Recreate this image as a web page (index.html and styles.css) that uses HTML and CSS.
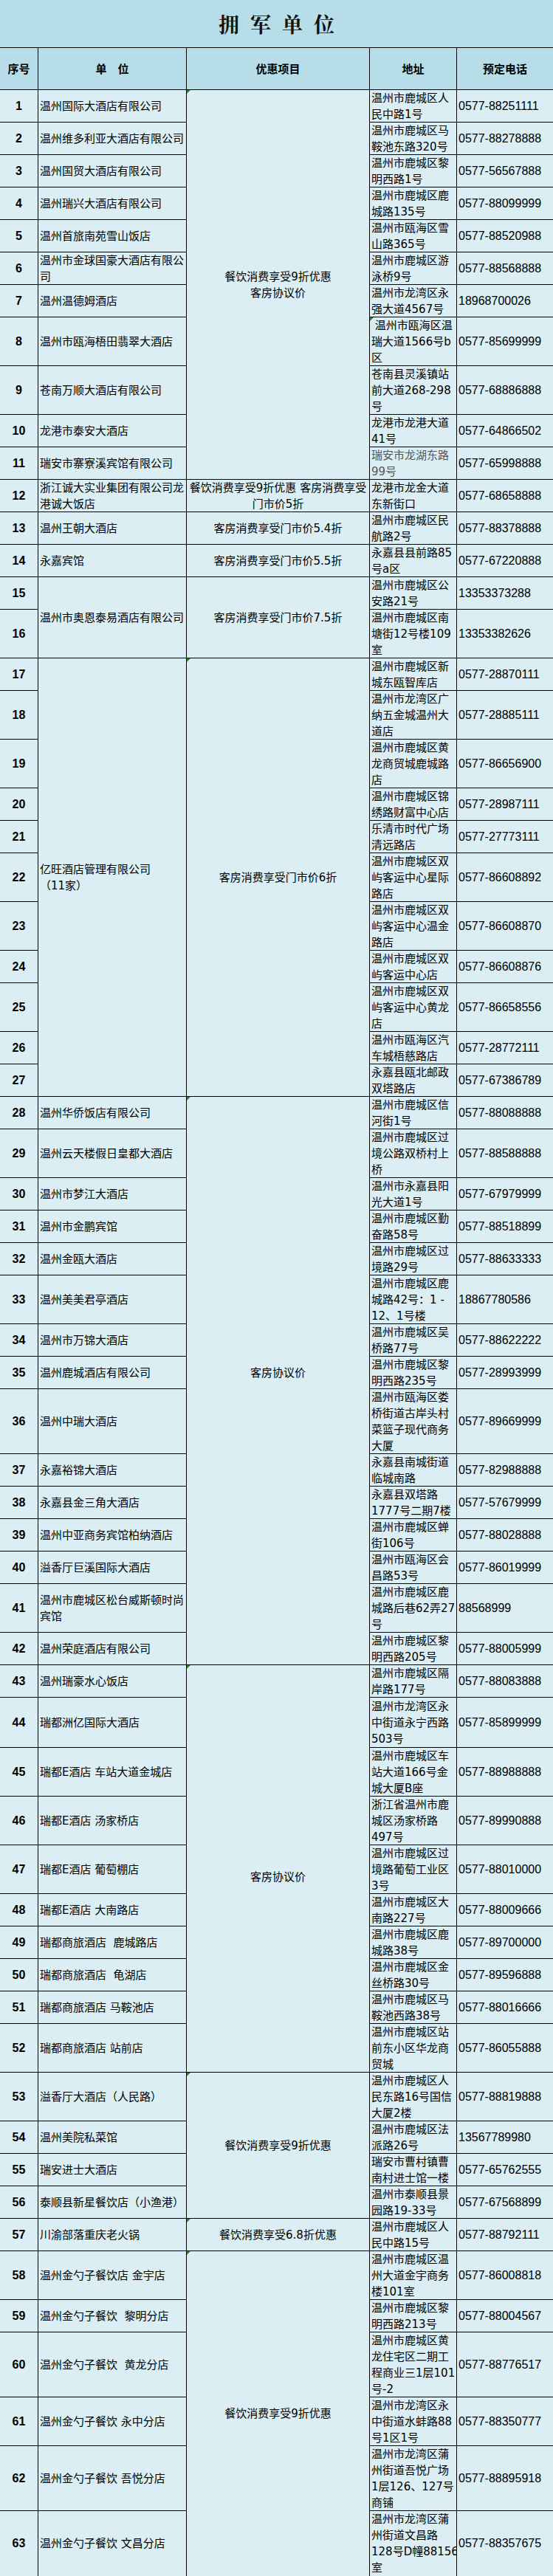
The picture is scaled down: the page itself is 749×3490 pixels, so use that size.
FILE: index.html
```html
<!DOCTYPE html>
<html lang="zh-CN">
<head>
<meta charset="utf-8">
<title>拥军单位</title>
<link rel="stylesheet" href="styles.css">
</head>
<body>
<div class="sheet">
  <div class="title">拥军单位</div>
  <div class="grid">
    <div class="c hd">序号</div><div class="c hd">单　位</div><div class="c hd">优惠项目</div><div class="c hd">地址</div><div class="c hd">预定电话</div>

    <div class="c idx">1</div><div class="c name">温州国际大酒店有限公司</div><div class="c offer s11 tri"><span>餐饮消费享受9折优惠<br>客房协议价</span></div><div class="c addr"><span>温州市鹿城区人<br>民中路1号</span></div><div class="c tel">0577-88251111</div>
    <div class="c idx">2</div><div class="c name">温州维多利亚大酒店有限公司</div><div class="c addr"><span>温州市鹿城区马<br>鞍池东路320号</span></div><div class="c tel">0577-88278888</div>
    <div class="c idx">3</div><div class="c name">温州国贸大酒店有限公司</div><div class="c addr"><span>温州市鹿城区黎<br>明西路1号</span></div><div class="c tel">0577-56567888</div>
    <div class="c idx">4</div><div class="c name">温州瑞兴大酒店有限公司</div><div class="c addr"><span>温州市鹿城区鹿<br>城路135号</span></div><div class="c tel">0577-88099999</div>
    <div class="c idx">5</div><div class="c name">温州首旅南苑雪山饭店</div><div class="c addr"><span>温州市瓯海区雪<br>山路365号</span></div><div class="c tel">0577-88520988</div>
    <div class="c idx">6</div><div class="c name"><span>温州市金球国豪大酒店有限公<br>司</span></div><div class="c addr"><span>温州市鹿城区游<br>泳桥9号</span></div><div class="c tel">0577-88568888</div>
    <div class="c idx">7</div><div class="c name">温州温德姆酒店</div><div class="c addr"><span>温州市龙湾区永<br>强大道4567号</span></div><div class="c tel">18968700026</div>
    <div class="c idx">8</div><div class="c name">温州市瓯海梧田翡翠大酒店</div><div class="c addr tri"><span>&#160;温州市瓯海区温<br>瑞大道1566号b<br>区</span></div><div class="c tel">0577-85699999</div>
    <div class="c idx">9</div><div class="c name">苍南万顺大酒店有限公司</div><div class="c addr"><span>苍南县灵溪镇站<br>前大道268-298<br>号</span></div><div class="c tel">0577-68886888</div>
    <div class="c idx">10</div><div class="c name">龙港市泰安大酒店</div><div class="c addr"><span>龙港市龙港大道<br>41号</span></div><div class="c tel">0577-64866502</div>
    <div class="c idx">11</div><div class="c name">瑞安市寨寮溪宾馆有限公司</div><div class="c addr grey"><span>瑞安市龙湖东路<br>99号</span></div><div class="c tel">0577-65998888</div>
    <div class="c idx">12</div><div class="c name"><span>浙江诚大实业集团有限公司龙<br>港诚大饭店</span></div><div class="c offer"><span>餐饮消费享受9折优惠 客房消费享受<br>门市价5折</span></div><div class="c addr"><span>龙港市龙金大道<br>东新街口</span></div><div class="c tel">0577-68658888</div>
    <div class="c idx">13</div><div class="c name">温州王朝大酒店</div><div class="c offer">客房消费享受门市价5.4折</div><div class="c addr"><span>温州市鹿城区民<br>航路2号</span></div><div class="c tel">0577-88378888</div>
    <div class="c idx">14</div><div class="c name">永嘉宾馆</div><div class="c offer">客房消费享受门市价5.5折</div><div class="c addr"><span>永嘉县县前路85<br>号a区</span></div><div class="c tel">0577-67220888</div>
    <div class="c idx">15</div><div class="c name s2">温州市奥恩泰易酒店有限公司</div><div class="c offer s2">客房消费享受门市价7.5折</div><div class="c addr"><span>温州市鹿城区公<br>安路21号</span></div><div class="c tel">13353373288</div>
    <div class="c idx">16</div><div class="c addr"><span>温州市鹿城区南<br>塘街12号楼109<br>室</span></div><div class="c tel">13353382626</div>
    <div class="c idx">17</div><div class="c name s11"><span>亿旺酒店管理有限公司<br>（11家）</span></div><div class="c offer s11 tri">客房消费享受门市价6折</div><div class="c addr"><span>温州市鹿城区新<br>城东瓯智库店</span></div><div class="c tel">0577-28870111</div>
    <div class="c idx">18</div><div class="c addr"><span>温州市龙湾区广<br>纳五金城温州大<br>道店</span></div><div class="c tel">0577-28885111</div>
    <div class="c idx">19</div><div class="c addr"><span>温州市鹿城区黄<br>龙商贸城鹿城路<br>店</span></div><div class="c tel">0577-86656900</div>
    <div class="c idx">20</div><div class="c addr"><span>温州市鹿城区锦<br>绣路财富中心店</span></div><div class="c tel">0577-28987111</div>
    <div class="c idx">21</div><div class="c addr"><span>乐清市时代广场<br>清远路店</span></div><div class="c tel">0577-27773111</div>
    <div class="c idx">22</div><div class="c addr"><span>温州市鹿城区双<br>屿客运中心星际<br>路店</span></div><div class="c tel">0577-86608892</div>
    <div class="c idx">23</div><div class="c addr"><span>温州市鹿城区双<br>屿客运中心温金<br>路店</span></div><div class="c tel">0577-86608870</div>
    <div class="c idx">24</div><div class="c addr"><span>温州市鹿城区双<br>屿客运中心店</span></div><div class="c tel">0577-86608876</div>
    <div class="c idx">25</div><div class="c addr"><span>温州市鹿城区双<br>屿客运中心黄龙<br>店</span></div><div class="c tel">0577-86658556</div>
    <div class="c idx">26</div><div class="c addr"><span>温州市瓯海区汽<br>车城梧慈路店</span></div><div class="c tel">0577-28772111</div>
    <div class="c idx">27</div><div class="c addr"><span>永嘉县瓯北邮政<br>双塔路店</span></div><div class="c tel">0577-67386789</div>
    <div class="c idx">28</div><div class="c name">温州华侨饭店有限公司</div><div class="c offer s15 tri up">客房协议价</div><div class="c addr"><span>温州市鹿城区信<br>河街1号</span></div><div class="c tel">0577-88088888</div>
    <div class="c idx">29</div><div class="c name">温州云天楼假日皇都大酒店</div><div class="c addr"><span>温州市鹿城区过<br>境公路双桥村上<br>桥</span></div><div class="c tel">0577-88588888</div>
    <div class="c idx">30</div><div class="c name">温州市梦江大酒店</div><div class="c addr"><span>温州市永嘉县阳<br>光大道1号</span></div><div class="c tel">0577-67979999</div>
    <div class="c idx">31</div><div class="c name">温州市金鹏宾馆</div><div class="c addr"><span>温州市鹿城区勤<br>奋路58号</span></div><div class="c tel">0577-88518899</div>
    <div class="c idx">32</div><div class="c name">温州金瓯大酒店</div><div class="c addr"><span>温州市鹿城区过<br>境路29号</span></div><div class="c tel">0577-88633333</div>
    <div class="c idx">33</div><div class="c name">温州美美君亭酒店</div><div class="c addr"><span>温州市鹿城区鹿<br>城路42号：1 -<br>12、1号楼</span></div><div class="c tel">18867780586</div>
    <div class="c idx">34</div><div class="c name">温州市万锦大酒店</div><div class="c addr"><span>温州市鹿城区吴<br>桥路77号</span></div><div class="c tel">0577-88622222</div>
    <div class="c idx">35</div><div class="c name">温州鹿城酒店有限公司</div><div class="c addr"><span>温州市鹿城区黎<br>明西路235号</span></div><div class="c tel">0577-28993999</div>
    <div class="c idx">36</div><div class="c name">温州中瑞大酒店</div><div class="c addr"><span>温州市瓯海区娄<br>桥街道古岸头村<br>菜篮子现代商务<br>大厦</span></div><div class="c tel">0577-89669999</div>
    <div class="c idx">37</div><div class="c name">永嘉裕锦大酒店</div><div class="c addr"><span>永嘉县南城街道<br>临城南路</span></div><div class="c tel">0577-82988888</div>
    <div class="c idx">38</div><div class="c name">永嘉县金三角大酒店</div><div class="c addr"><span>永嘉县双塔路<br>1777号二期7楼</span></div><div class="c tel">0577-57679999</div>
    <div class="c idx">39</div><div class="c name">温州中亚商务宾馆柏纳酒店</div><div class="c addr"><span>温州市鹿城区蝉<br>街106号</span></div><div class="c tel">0577-88028888</div>
    <div class="c idx">40</div><div class="c name">溢香厅巨溪国际大酒店</div><div class="c addr"><span>温州市瓯海区会<br>昌路53号</span></div><div class="c tel">0577-86019999</div>
    <div class="c idx">41</div><div class="c name"><span>温州市鹿城区松台威斯顿时尚<br>宾馆</span></div><div class="c addr"><span>温州市鹿城区鹿<br>城路后巷62弄27<br>号</span></div><div class="c tel">88568999</div>
    <div class="c idx">42</div><div class="c name">温州荣庭酒店有限公司</div><div class="c addr"><span>温州市鹿城区黎<br>明西路205号</span></div><div class="c tel">0577-88005999</div>
    <div class="c idx">43</div><div class="c name">温州瑞豪水心饭店</div><div class="c offer s10 tri down">客房协议价</div><div class="c addr"><span>温州市鹿城区隔<br>岸路177号</span></div><div class="c tel">0577-88083888</div>
    <div class="c idx">44</div><div class="c name">瑞都洲亿国际大酒店</div><div class="c addr"><span>温州市龙湾区永<br>中街道永宁西路<br>503号</span></div><div class="c tel">0577-85899999</div>
    <div class="c idx">45</div><div class="c name">瑞都E酒店 车站大道金城店</div><div class="c addr"><span>温州市鹿城区车<br>站大道166号金<br>城大厦B座</span></div><div class="c tel">0577-88988888</div>
    <div class="c idx">46</div><div class="c name">瑞都E酒店 汤家桥店</div><div class="c addr"><span>浙江省温州市鹿<br>城区汤家桥路<br>497号</span></div><div class="c tel">0577-89990888</div>
    <div class="c idx">47</div><div class="c name">瑞都E酒店 葡萄棚店</div><div class="c addr"><span>温州市鹿城区过<br>境路葡萄工业区<br>3号</span></div><div class="c tel">0577-88010000</div>
    <div class="c idx">48</div><div class="c name">瑞都E酒店 大南路店</div><div class="c addr"><span>温州市鹿城区大<br>南路227号</span></div><div class="c tel">0577-88009666</div>
    <div class="c idx">49</div><div class="c name">瑞都商旅酒店&#160; 鹿城路店</div><div class="c addr"><span>温州市鹿城区鹿<br>城路38号</span></div><div class="c tel">0577-89700000</div>
    <div class="c idx">50</div><div class="c name">瑞都商旅酒店&#160; 龟湖店</div><div class="c addr"><span>温州市鹿城区金<br>丝桥路30号</span></div><div class="c tel">0577-89596888</div>
    <div class="c idx">51</div><div class="c name">瑞都商旅酒店 马鞍池店</div><div class="c addr"><span>温州市鹿城区马<br>鞍池西路38号</span></div><div class="c tel">0577-88016666</div>
    <div class="c idx">52</div><div class="c name">瑞都商旅酒店 站前店</div><div class="c addr"><span>温州市鹿城区站<br>前东小区华龙商<br>贸城</span></div><div class="c tel">0577-86055888</div>
    <div class="c idx">53</div><div class="c name">溢香厅大酒店（人民路）</div><div class="c offer s4 tri">餐饮消费享受9折优惠</div><div class="c addr"><span>温州市鹿城区人<br>民东路16号国信<br>大厦2楼</span></div><div class="c tel">0577-88819888</div>
    <div class="c idx">54</div><div class="c name">温州美院私菜馆</div><div class="c addr"><span>温州市鹿城区法<br>派路26号</span></div><div class="c tel">13567789980</div>
    <div class="c idx">55</div><div class="c name">瑞安进士大酒店</div><div class="c addr"><span>瑞安市曹村镇曹<br>南村进士馆一楼</span></div><div class="c tel">0577-65762555</div>
    <div class="c idx">56</div><div class="c name">泰顺县新星餐饮店（小渔港）</div><div class="c addr"><span>温州市泰顺县景<br>园路19-33号</span></div><div class="c tel">0577-67568899</div>
    <div class="c idx">57</div><div class="c name">川渝部落重庆老火锅</div><div class="c offer tri">餐饮消费享受6.8折优惠</div><div class="c addr"><span>温州市鹿城区人<br>民中路15号</span></div><div class="c tel">0577-88792111</div>
    <div class="c idx">58</div><div class="c name">温州金勺子餐饮店 金宇店</div><div class="c offer s6 tri">餐饮消费享受9折优惠</div><div class="c addr"><span>温州市鹿城区温<br>州大道金宇商务<br>楼101室</span></div><div class="c tel">0577-86008818</div>
    <div class="c idx">59</div><div class="c name">温州金勺子餐饮&#160; 黎明分店</div><div class="c addr"><span>温州市鹿城区黎<br>明西路213号</span></div><div class="c tel">0577-88004567</div>
    <div class="c idx">60</div><div class="c name">温州金勺子餐饮&#160; 黄龙分店</div><div class="c addr"><span>温州市鹿城区黄<br>龙住宅区二期工<br>程商业三1层101<br>号-2</span></div><div class="c tel">0577-88776517</div>
    <div class="c idx">61</div><div class="c name">温州金勺子餐饮 永中分店</div><div class="c addr"><span>温州市龙湾区永<br>中街道水蚌路88<br>号1区1号</span></div><div class="c tel">0577-88350777</div>
    <div class="c idx">62</div><div class="c name">温州金勺子餐饮 吾悦分店</div><div class="c addr"><span>温州市龙湾区蒲<br>州街道吾悦广场<br>1层126、127号<br>商铺</span></div><div class="c tel">0577-88895918</div>
    <div class="c idx">63</div><div class="c name">温州金勺子餐饮 文昌分店</div><div class="c addr"><span>温州市龙湾区蒲<br>州街道文昌路<br>128号D幢88156<br>室</span></div><div class="c tel">0577-88357675</div>
  </div>
</div>
</body>
</html>
```

FILE: styles.css
```css
html, body {
  margin: 0;
  padding: 0;
  background: #daeef3;
}

body {
  width: 749px;
  overflow: hidden;
  font-family: "DejaVu Sans", "Noto Sans CJK SC", sans-serif;
  font-size: 15px;
  line-height: 22px;
  color: #000;
}

.sheet {
  width: 749px;
}

.title {
  box-sizing: border-box;
  height: 64px;
  background: #b7dee8;
  display: flex;
  align-items: center;
  justify-content: center;
  padding-left: 15px;
  font-family: "Noto Serif CJK SC", "Noto Sans CJK SC", serif;
  font-weight: 700;
  font-size: 28px;
  letter-spacing: 15px;
  color: #111;
}

.grid {
  display: grid;
  grid-template-columns: 51px 200px 247px 117px 130px;
  grid-template-rows: 56px repeat(7, 43px) 65px 65px repeat(6, 43px) 65px 43px 65px 65px 43px 43px 65px 65px 43px 65px repeat(3, 43px) 65px repeat(3, 43px) 65px 43px 43px 87px repeat(4, 43px) 65px 43px 43px 67px repeat(3, 65px) repeat(4, 43px) 65px 65px repeat(4, 43px) 65px 43px 87px 65px 87px 88px;
  gap: 1px;
  background: #000;
  border-top: 1px solid #000;
}

.c {
  position: relative;
  display: flex;
  align-items: center;
  min-width: 0;
  background: #daeef3;
  white-space: nowrap;
}

.hd {
  background: #b7dee8;
  justify-content: center;
  font-family: "Noto Sans CJK SC", sans-serif;
  font-weight: 700;
}

.idx {
  grid-column: 1;
  justify-content: center;
  font-family: "Liberation Sans", sans-serif;
  font-weight: 700;
  font-size: 16px;
}

.name {
  grid-column: 2;
  padding-left: 2px;
}

.offer {
  grid-column: 3;
  justify-content: center;
  text-align: center;
}

.addr {
  grid-column: 4;
  padding-left: 2px;
}

.tel {
  grid-column: 5;
  padding-left: 2px;
  font-family: "Liberation Sans", sans-serif;
  font-size: 16px;
}

.grey {
  color: #555;
}

.s2 { grid-row: span 2; }
.s4 { grid-row: span 4; }
.s6 { grid-row: span 6; }
.s10 { grid-row: span 10; }
.s11 { grid-row: span 11; }
.s15 { grid-row: span 15; }

.up {
  padding-bottom: 21px;
}

.down {
  padding-top: 23px;
}

.tri::before {
  content: "";
  position: absolute;
  top: 0;
  left: 0;
  width: 0;
  height: 0;
  border-top: 5px solid #1e8b1e;
  border-right: 5px solid transparent;
}
```
